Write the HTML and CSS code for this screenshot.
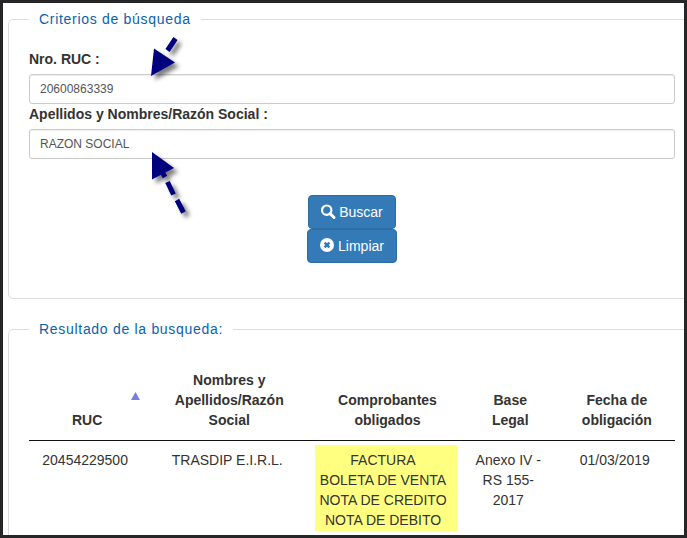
FILE: index.html
```html
<!DOCTYPE html>
<html lang="es">
<head>
    <meta charset="UTF-8">
    <meta name="viewport" content="width=device-width, initial-scale=1.0">
    <title>Consulta de obligados</title>
    <link rel="stylesheet" href="styles.css">
</head>
<body>

<div class="page">
    <form class="search-form">
        <fieldset>
            <legend>Criterios de búsqueda</legend>
            <div class="form-group">
                <label for="ruc">Nro. RUC :</label>
                <input type="text" id="ruc" value="20600863339">
                <svg class="arrow arrow-ruc" width="40" height="52" viewBox="0 0 40 52">
                    <path class="arrow-head" d="M5 41 L8 13.500 L29 27.500 Z"/>
                    <path class="arrow-line" d="M21.500 15.500 L29.500 3.500"/>
                </svg>
            </div>
            <div class="form-group">
                <label for="razon">Apellidos y Nombres/Razón Social :</label>
                <input type="text" id="razon" value="RAZON SOCIAL">
                <svg class="arrow arrow-razon" width="46" height="74" viewBox="0 0 46 74">
                    <path class="arrow-head" d="M6 6 L6 33.500 L28 22 Z"/>
                    <path class="arrow-line" d="M15 24 L19 31 M21.500 36 L27.500 48.500 M31 54 L37.500 66.500"/>
                </svg>
            </div>
            <div class="buttons">
                <button type="submit" class="btn">
                    <svg class="icon" viewBox="0 0 14 14">
                        <circle cx="5.700" cy="5.200" r="4.700" fill="none" stroke="#fff" stroke-width="2.200"/>
                        <path d="M9 8.500 L13 12.500" stroke="#fff" stroke-width="3" stroke-linecap="round"/>
                    </svg>
                    Buscar
                </button>
                <button type="reset" class="btn">
                    <svg class="icon" viewBox="0 0 14 14">
                        <circle cx="7" cy="6" r="7" fill="#fff"/>
                        <path d="M4.600 3.600 L9.400 8.400 M9.400 3.600 L4.600 8.400" stroke="#337ab7" stroke-width="2.400"/>
                    </svg>
                    Limpiar
                </button>
            </div>
        </fieldset>
    </form>

    <fieldset>
        <legend>Resultado de la busqueda:</legend>
        <table>
            <thead>
                <tr>
                    <th class="col-ruc">RUC
                        <svg class="sort" width="9" height="8" viewBox="0 0 9 8"><path d="M4.500 0 L9 8 H0 Z" fill="#7b7fdc"/></svg>
                    </th>
                    <th class="col-nombre">Nombres y Apellidos/Razón Social</th>
                    <th class="col-comp">Comprobantes obligados</th>
                    <th class="col-base">Base Legal</th>
                    <th class="col-fecha">Fecha de obligación</th>
                </tr>
            </thead>
            <tbody>
                <tr>
                    <td>20454229500</td>
                    <td>TRASDIP E.I.R.L.</td>
                    <td class="comp"><mark>FACTURA<br>BOLETA DE VENTA<br>NOTA DE CREDITO<br>NOTA DE DEBITO</mark></td>
                    <td>Anexo IV - RS 155-2017</td>
                    <td>01/03/2019</td>
                </tr>
            </tbody>
        </table>
    </fieldset>
</div>

</body>
</html>
```
FILE: styles.css
```css
* { box-sizing: border-box; }
body { margin: 0; font-family: "Liberation Sans", Arial, sans-serif; font-size: 14px; line-height: 20px; color: #333; background: #fff; }

.page { height: 100vh; overflow: hidden; padding: 6px 0 0 5px; border: 3px solid #262527; }

/* el recuadro sigue por debajo del borde derecho */
fieldset { margin: 0 -12px 20px 0; padding: 20px 20px 35px; border: 1px solid #ddd; border-radius: 5px; min-width: 0; }
legend { padding: 0 10px; color: #0a62ad; letter-spacing: .05em; }

.form-group { position: relative; }
.form-group label { display: block; margin-bottom: 5px; font-weight: bold; }
.form-group input { display: block; width: 100%; height: 30px; padding: 5px 10px; font-family: inherit; font-size: 12px; color: #555; background: #fff; border: 1px solid #ccc; border-radius: 3px; box-shadow: inset 0 1px 1px rgba(0, 0, 0, .075); }

.buttons { display: flex; flex-direction: column; align-items: center; margin-top: 36px; }
.btn { display: flex; align-items: center; gap: 4px; padding: 6px 12px; font-family: inherit; font-size: 14px; line-height: 20px; color: #fff; background: #337ab7; border: 1px solid #2e6da4; border-radius: 4px; cursor: pointer; }
.btn:hover { background: #286090; }
.icon { width: 14px; height: 14px; overflow: visible; }

/* flechas de ayuda */
.arrow { position: absolute; left: 117px; overflow: visible; pointer-events: none; z-index: 1; filter: drop-shadow(4px 4px 2px rgba(0, 0, 0, .5)); }
.arrow-ruc { top: -14px; }
.arrow-razon { top: 42px; }
.arrow-head { fill: #00007f; }
.arrow-line { fill: none; stroke: #00007f; stroke-width: 5px; }

table { width: 100%; table-layout: fixed; border-collapse: separate; border-spacing: 0; }
th { position: relative; padding: 11px 18px 10px; vertical-align: bottom; border-bottom: 1px solid #111; }
td { padding: 9px 14px 9px 10px; vertical-align: top; text-align: center; }
.col-ruc { width: 18%; }
.col-nombre { width: 26%; }
.col-comp { width: 23%; }
.col-base { width: 15%; }
.col-fecha { width: 18%; }
.sort { position: absolute; top: 33px; right: 5px; }
.comp { padding: 4px 5px 4px 2px; }
mark { display: block; padding: 5px 8px 1px 2px; color: #333; background: #ffff80; }
```
